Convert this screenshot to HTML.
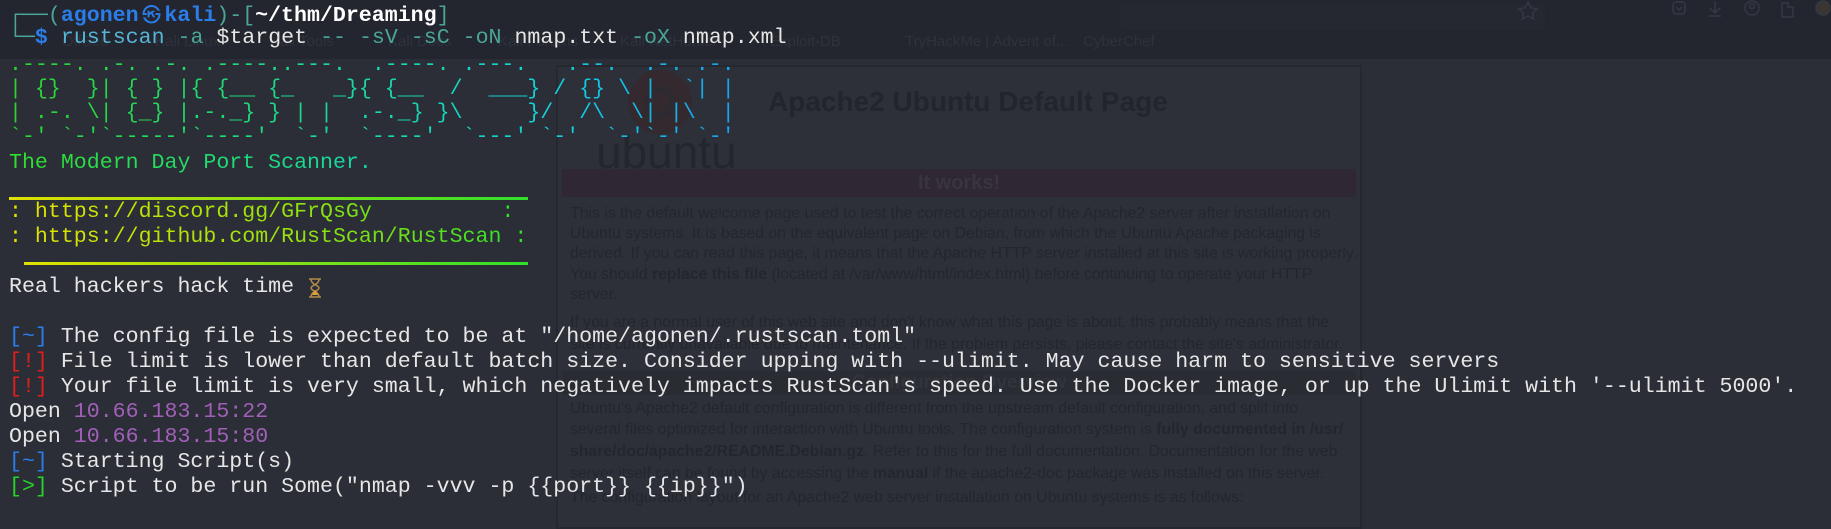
<!DOCTYPE html>
<html><head><meta charset="utf-8">
<style>
html,body{margin:0;padding:0}
body{width:1831px;height:512px;overflow:hidden;background:#2b2e37;position:relative;font-family:"Liberation Mono",monospace}
.abs{position:absolute}
.bar{left:0;top:0;width:1831px;height:59px;background:#23262e}
.bm{position:absolute;top:33px;font:15px "Liberation Sans",sans-serif;color:#2f323b;white-space:nowrap}
.box{left:556px;top:65px;width:802px;height:460px;background:#2d3039;border:2px solid #25282f}
.pg{position:absolute;left:570px;font:15.8px "Liberation Sans",sans-serif;color:#24262e;white-space:nowrap}
.pg b{font-weight:bold}
.t{position:absolute;left:9px;height:25px;line-height:25px;font-size:21.6px;white-space:pre;color:#e6e6e6}
.g{display:inline-block;-webkit-background-clip:text;background-clip:text;color:transparent}
.bl{color:#2b7de9}.rd{color:#e11d1d}.gr{color:#27d327}.pu{color:#a160b8}.tl{color:#4aa596}.lb{color:#56b4d6}
.wb{color:#fff;font-weight:bold}
</style></head><body>
<div class="abs bar"></div>
<div class="abs" style="left:1120px;top:4px;width:425px;height:26px;background:#252830;border-radius:3px"></div>
<div class="bm" style="left:62px">OffSec</div>
<div class="bm" style="left:155px">Kali Linux</div>
<div class="bm" style="left:270px">Kali Tools</div>
<div class="bm" style="left:388px">Kali Docs</div>
<div class="bm" style="left:498px">Kali Forums</div>
<div class="bm" style="left:620px">Kali NetHunter</div>
<div class="bm" style="left:770px">Exploit-DB</div>
<div class="bm" style="left:888px;display:none"></div>
<div class="bm" style="left:905px">TryHackMe | Advent of...</div>
<div class="bm" style="left:1083px">CyberChef</div>
<svg class="abs" style="left:0;top:0" width="1831" height="30" fill="none" stroke="#353843" stroke-width="1.5">
<path d="M1528 2l3 6 6 1-4.5 4 1 6-5.5-3-5.5 3 1-6-4.5-4 6-1z"/>
<rect x="1673" y="2" width="12" height="12" rx="3"/><path d="M1676 7l3 3 3-3"/>
<path d="M1715 1v12M1710 8l5 5 5-5M1709 16h12"/>
<circle cx="1752" cy="8" r="7"/><circle cx="1752" cy="6" r="2.5"/>
<path d="M1782 3h6v4h5v10h-11z"/>
<circle cx="1823" cy="8" r="7" fill="#3a3530"/>
</svg>

<div class="abs box"></div>
<svg class="abs" style="left:590px;top:68px" width="160" height="110">
<circle cx="70" cy="34" r="32" fill="#33292f"/>
<circle cx="70" cy="34" r="13" fill="none" stroke="#2d2a31" stroke-width="6"/>
<text x="6" y="100" font-family="Liberation Sans" font-size="46" fill="#24262d">ubuntu</text>
</svg>
<div class="abs" style="left:768px;top:86px;font:bold 28px 'Liberation Sans',sans-serif;color:#23252c;white-space:nowrap">Apache2 Ubuntu Default Page</div>
<div class="abs" style="left:562px;top:169px;width:794px;height:28px;background:#2f2733;text-align:center;font:bold 20px/28px 'Liberation Sans',sans-serif;color:#3a3440">It works!</div>
<div class="pg" style="top:205px">This is the default welcome page used to test the correct operation of the Apache2 server after installation on</div>
<div class="pg" style="top:225px">Ubuntu systems. It is based on the equivalent page on Debian, from which the Ubuntu Apache packaging is</div>
<div class="pg" style="top:245px">derived. If you can read this page, it means that the Apache HTTP server installed at this site is working properly.</div>
<div class="pg" style="top:266px">You should <b>replace this file</b> (located at /var/www/html/index.html) before continuing to operate your HTTP</div>
<div class="pg" style="top:286px">server.</div>
<div class="pg" style="top:314px">If you are a normal user of this web site and don't know what this page is about, this probably means that the</div>
<div class="pg" style="top:336px">site is currently unavailable due to maintenance. If the problem persists, please contact the site's administrator.</div>
<div class="abs" style="left:562px;top:371px;width:794px;height:24px;background:#2a2c34;text-align:center;font:bold 19px/24px 'Liberation Sans',sans-serif;color:#32343d">Configuration Overview</div>
<div class="pg" style="top:400px">Ubuntu's Apache2 default configuration is different from the upstream default configuration, and split into</div>
<div class="pg" style="top:421px">several files optimized for interaction with Ubuntu tools. The configuration system is <b>fully documented in /usr/</b></div>
<div class="pg" style="top:443px"><b>share/doc/apache2/README.Debian.gz</b>. Refer to this for the full documentation. Documentation for the web</div>
<div class="pg" style="top:465px">server itself can be found by accessing the <b>manual</b> if the apache2-doc package was installed on this server.</div>
<div class="pg" style="top:489px">The configuration layout for an Apache2 web server installation on Ubuntu systems is as follows:</div>

<!-- terminal -->
<div class="t" style="top:1px"><span class="tl">┌──(</span><span class="bl" style="font-weight:bold">agonen</span><span class="bl" style="display:inline-block;width:25.8px;text-align:center;font-family:'Noto Sans CJK JP',sans-serif;font-size:19px">㉿</span><span class="bl" style="font-weight:bold">kali</span><span class="tl">)-[</span><span class="wb">~/thm/Dreaming</span><span class="tl">]</span></div>
<div class="t" style="top:26px"><span class="tl">└─</span><span class="bl" style="font-weight:bold">$</span> <span class="lb">rustscan</span> <span class="tl">-a</span> $target <span class="tl">-- -sV -sC -oN</span> nmap.txt <span class="tl">-oX</span> nmap.xml</div>

<div class="t" style="top:53px"><span class="g" style="background-image:linear-gradient(90deg,#2bd62b,#1ad99a 45%,#14d0dc 75%,#1a9ff0)">.----. .-. .-. .----..---.  .----. .---.   .--.  .-. .-.</span></div>
<div class="t" style="top:77px"><span class="g" style="background-image:linear-gradient(90deg,#2bd62b,#1ad99a 45%,#14d0dc 75%,#1a9ff0)">| {}  }| { } |{ {__ {_   _}{ {__  /  ___} / {} \ |  `| |</span></div>
<div class="t" style="top:101px"><span class="g" style="background-image:linear-gradient(90deg,#2bd62b,#1ad99a 45%,#14d0dc 75%,#1a9ff0)">| .-. \| {_} |.-._} } | |  .-._} }\     }/  /\  \| |\  |</span></div>
<div class="t" style="top:125px"><span class="g" style="background-image:linear-gradient(90deg,#2bd62b,#1ad99a 45%,#14d0dc 75%,#1a9ff0)">`-' `-'`-----'`----'  `-'  `----'  `---' `-'  `-'`-' `-'</span></div>

<div class="t" style="top:151px"><span class="g" style="background-image:linear-gradient(90deg,#2fe02a,#16d6a6)">The Modern Day Port Scanner.</span></div>
<div class="abs" style="left:9px;top:197px;width:519px;height:3px;background:linear-gradient(90deg,#e2e000,#2fe02a)"></div>
<div class="t" style="top:200px"><span class="g" style="background-image:linear-gradient(90deg,#e6e300,#8fe010 60%,#2fe02a)">: https://discord.gg/GFrQsGy          :</span></div>
<div class="t" style="top:225px"><span class="g" style="background-image:linear-gradient(90deg,#e6e300,#8fe010 60%,#2fe02a)">: https://github.com/RustScan/RustScan :</span></div>
<div class="abs" style="left:24px;top:262px;width:504px;height:3px;background:linear-gradient(90deg,#e2e000,#2fe02a)"></div>

<div class="t" style="top:275px">Real hackers hack time</div>
<svg class="abs" style="left:308px;top:278px" width="14" height="20"><path d="M1 1h12M1 19h12M3 1c0 6 8 6 8 9s-8 3-8 9M11 1c0 6-8 6-8 9s8 3 8 9" fill="none" stroke="#b08a4a" stroke-width="1.5"/><path d="M4 17h6l-3-5z" fill="#e0a030"/></svg>

<div class="t" style="top:325px"><span class="bl">[~]</span> The config file is expected to be at "/home/agonen/.rustscan.toml"</div>
<div class="t" style="top:350px"><span class="rd">[!]</span> File limit is lower than default batch size. Consider upping with --ulimit. May cause harm to sensitive servers</div>
<div class="t" style="top:375px"><span class="rd">[!]</span> Your file limit is very small, which negatively impacts RustScan's speed. Use the Docker image, or up the Ulimit with '--ulimit 5000'.</div>
<div class="t" style="top:400px">Open <span class="pu">10.66.183.15:22</span></div>
<div class="t" style="top:425px">Open <span class="pu">10.66.183.15:80</span></div>
<div class="t" style="top:450px"><span class="bl">[~]</span> Starting Script(s)</div>
<div class="t" style="top:475px"><span class="gr">[&gt;]</span> Script to be run Some("nmap -vvv -p {{port}} {{ip}}")</div>
</body></html>
